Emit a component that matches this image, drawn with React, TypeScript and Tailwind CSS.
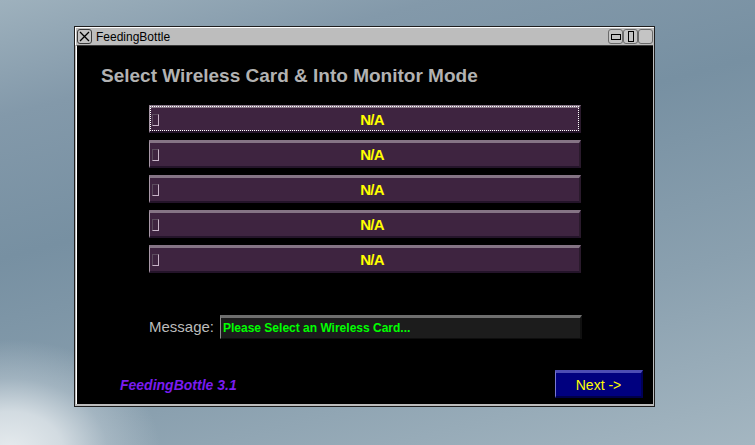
import React from 'react';

const CardButton: React.FC<{ focused?: boolean }> = ({ focused }) => (
  <div className="relative h-[28px] w-[432px] bg-[#3e2440] border-t-[3px] border-t-[#857485] border-l border-l-[#a898a8] border-b-2 border-b-[#24142a] border-r-2 border-r-[#2a1a2c] flex items-center">
    <span className="ml-[2px] h-[12px] w-[7px] border-r border-b border-r-[#c8b4c8] border-b-[#c8b4c8] border-l border-t border-l-[#5a4a5c] border-t-[#5a4a5c]" />
    <span className="flex-1 text-center pl-[6px] text-[15px] font-bold tracking-[-0.8px] text-[#ffff00] leading-none">N/A</span>
    {focused && (
      <span className="absolute inset-[0px] -top-[2px] border border-dotted border-white pointer-events-none" />
    )}
  </div>
);

const TitleButton: React.FC<{ children?: React.ReactNode }> = ({ children }) => (
  <div className="h-[15px] w-[15px] rounded-[3px] border border-[#6a6a6a] bg-[#c4c4c4] flex items-center justify-center">
    {children}
  </div>
);

export default function App() {
  return (
    <div
      className="w-[755px] h-[445px] overflow-hidden pl-[74px] pt-[26px] bg-[radial-gradient(ellipse_150px_110px_at_10px_450px,#e6ebee_0%,#d2dbe1_35%,rgba(190,203,212,0.5)_65%,transparent_100%),linear-gradient(165deg,#9eb1bd_0%,#8399aa_18%,#7790a2_40%,#8aa0af_70%,#a4b6c1_100%)]"
      style={{ fontFamily: '"Liberation Sans", Arial, sans-serif' }}
    >
      <div className="w-[581px] h-[381px] border border-[#1e1e1e] bg-[#bdbdbd] flex flex-col">
        {/* title bar */}
        <div className="h-[18px] border-t border-l border-t-white border-l-white flex items-center pl-[1px] pr-[1px]">
          <div className="h-[15px] w-[15px] rounded-[3px] border border-[#3a3a3a] bg-[#c4c4c4] flex items-center justify-center">
            <svg width="11" height="11" viewBox="0 0 11 11">
              <path d="M1 1 L10 10 M10 1 L1 10" stroke="#000" strokeWidth="1.3" />
            </svg>
          </div>
          <span className="ml-[4px] text-[12px] text-black leading-none">FeedingBottle</span>
          <div className="ml-auto flex">
            <TitleButton>
              <span className="h-[6px] w-[10px] border border-black" />
            </TitleButton>
            <TitleButton>
              <span className="h-[11px] w-[6px] border border-black" />
            </TitleButton>
            <TitleButton />
          </div>
        </div>
        {/* content */}
        <div className="flex-1 mx-[1px] mb-[2px] border-t border-t-[#3a3a3a] border-l border-l-white bg-black flex flex-col">
          <div className="mt-[19px] ml-[24px] h-[21px] leading-[21px] text-[19px] font-bold text-[#b2b2b2]">
            Select Wireless Card &amp; Into Monitor Mode
          </div>
          <div className="mt-[19px] ml-[72px] flex flex-col gap-[7px]">
            <CardButton focused />
            <CardButton />
            <CardButton />
            <CardButton />
            <CardButton />
          </div>
          <div className="mt-[42px] ml-[72px] flex items-center">
            <span className="w-[71px] text-[15px] text-[#bcbcbc]">Message:</span>
            <div className="h-[24px] w-[362px] bg-[#1c1c1c] border-t-[3px] border-t-[#6e6e6e] border-l border-l-[#8a8a8a] border-b border-b-[#0e0e0e] border-r-2 border-r-[#101010] flex items-center pl-[2px]">
              <span className="text-[12px] font-bold text-[#00ff00] leading-none">
                Please Select an Wireless Card...
              </span>
            </div>
          </div>
          <div className="mt-[31px] flex items-center">
            <span className="ml-[43px] mt-[2px] text-[14px] italic font-bold text-[#7a1cf0] leading-none">
              FeedingBottle 3.1
            </span>
            <div className="ml-auto mr-[10px] h-[28px] w-[88px] bg-[#00007f] border-t-[3px] border-t-[#4c4cb4] border-l border-l-[#7a7ad0] border-b-2 border-b-[#00004a] border-r-2 border-r-[#000058] flex items-center justify-center">
              <span className="text-[14px] font-medium text-[#ffff00] leading-none">Next -&gt;</span>
            </div>
          </div>
        </div>
      </div>
    </div>
  );
}
